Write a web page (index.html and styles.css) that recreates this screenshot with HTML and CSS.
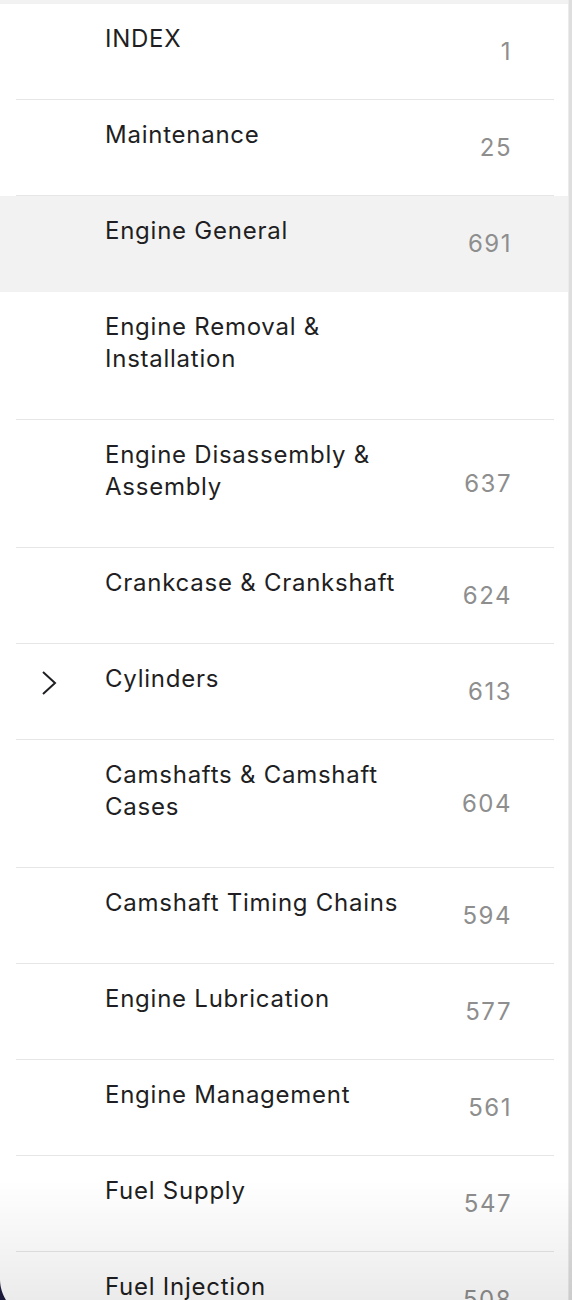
FILE: index.html
```html
<!DOCTYPE html>
<html lang="en">
<head>
    <meta charset="UTF-8">
    <meta name="viewport" content="width=device-width, initial-scale=1.0">
    <title>Contents</title>
    <link rel="stylesheet" href="styles.css">
</head>
<body>

    <div class="toc">
        <ul class="toc-list">
            <li class="toc-item"><div class="toc-row"><span class="toc-icon"></span><span class="toc-label">INDEX</span><span class="toc-page">1</span></div></li>
            <li class="toc-item"><div class="toc-row"><span class="toc-icon"></span><span class="toc-label">Maintenance</span><span class="toc-page">25</span></div></li>
            <li class="toc-item active"><div class="toc-row"><span class="toc-icon"></span><span class="toc-label">Engine General</span><span class="toc-page">691</span></div></li>
            <li class="toc-item"><div class="toc-row"><span class="toc-icon"></span><span class="toc-label">Engine Removal &amp; Installation</span><span class="toc-page"></span></div></li>
            <li class="toc-item"><div class="toc-row"><span class="toc-icon"></span><span class="toc-label">Engine Disassembly &amp; Assembly</span><span class="toc-page">637</span></div></li>
            <li class="toc-item"><div class="toc-row"><span class="toc-icon"></span><span class="toc-label">Crankcase &amp; Crankshaft</span><span class="toc-page">624</span></div></li>
            <li class="toc-item"><div class="toc-row">
                <span class="toc-icon">
                    <svg class="chevron" width="16" height="26" viewBox="0 0 16 26"><path d="M2 2 L14 13 L2 24" fill="none" stroke="#1f1f23" stroke-width="2"/></svg>
                </span>
                <span class="toc-label">Cylinders</span><span class="toc-page">613</span>
            </div></li>
            <li class="toc-item"><div class="toc-row"><span class="toc-icon"></span><span class="toc-label">Camshafts &amp; Camshaft Cases</span><span class="toc-page">604</span></div></li>
            <li class="toc-item"><div class="toc-row"><span class="toc-icon"></span><span class="toc-label">Camshaft Timing Chains</span><span class="toc-page">594</span></div></li>
            <li class="toc-item"><div class="toc-row"><span class="toc-icon"></span><span class="toc-label">Engine Lubrication</span><span class="toc-page">577</span></div></li>
            <li class="toc-item"><div class="toc-row"><span class="toc-icon"></span><span class="toc-label">Engine Management</span><span class="toc-page">561</span></div></li>
            <li class="toc-item"><div class="toc-row"><span class="toc-icon"></span><span class="toc-label">Fuel Supply</span><span class="toc-page">547</span></div></li>
            <li class="toc-item"><div class="toc-row"><span class="toc-icon"></span><span class="toc-label">Fuel Injection</span><span class="toc-page">508</span></div></li>
        </ul>
    </div>

    <div class="scroll-track"></div>

    <div class="fade"></div>
    <div class="corner"></div>

</body>
</html>
```

FILE: styles.css
```css
html, body {
    height: 100%;
    overflow: hidden;
}

body {
    font-family: Inter, "Noto Sans", sans-serif;
    margin: 0;
    padding: 0;
    display: flex;
    background-color: white;
    color: #1f1f23;
}

.toc {
    flex: 1;
    border-top: 4px solid #f2f2f2;
}

.toc-list {
    list-style: none;
    margin: 0;
    padding: 0;
}

.toc-item {
    padding: 0 14px 0 16px;
}

.toc-item.active {
    background-color: #f2f2f2;
}

.toc-row {
    display: grid;
    grid-template-columns: 89px 330px 1fr;
    border-bottom: 1px solid #e6e6e6;
}

.toc-item.active .toc-row {
    border-bottom-color: transparent;
}

.toc-icon {
    padding: 26px 0 0 25px;
}

.chevron {
    display: block;
}

.toc-label {
    font-size: 24px;
    line-height: 32px;
    letter-spacing: 0.75px;
    padding: 19px 0 44px;
}

.toc-page {
    align-self: center;
    text-align: right;
    padding-right: 42px;
    font-size: 24px;
    line-height: 32px;
    letter-spacing: 1.5px;
    color: #8e8e8e;
}

.scroll-track {
    width: 3px;
    flex-shrink: 0;
    background-color: #dedede;
    border-left: 1px solid #ebebeb;
}

/* bottom shadow and window corner lying over the list */
.fade {
    position: fixed;
    left: 0;
    right: 0;
    bottom: 0;
    height: 120px;
    background: linear-gradient(to bottom, rgba(0, 0, 0, 0), rgba(0, 0, 0, 0.08));
    pointer-events: none;
}

.corner {
    position: fixed;
    left: 0;
    bottom: -19px;
    width: 40px;
    height: 40px;
    background: radial-gradient(circle at 100% 0, transparent 39.5px, #1b1a3c 40.5px);
}
```
